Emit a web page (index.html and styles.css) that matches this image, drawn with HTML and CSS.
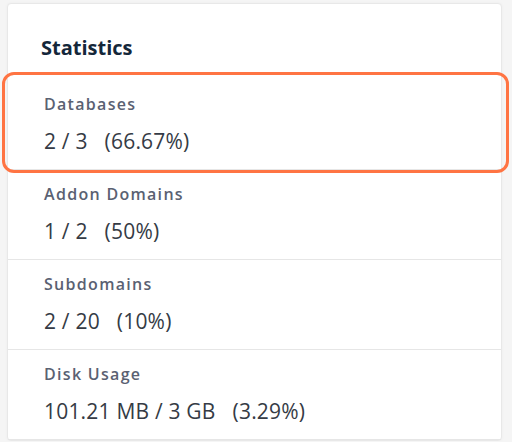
FILE: index.html
```html
<!DOCTYPE html>
<html>
<head>
<meta charset="utf-8">
<link rel="stylesheet" href="styles.css">
</head>
<body>
<div class="card">
  <h2 class="title">Statistics</h2>
  <div class="stats">
    <div class="row highlighted">
      <div class="label">Databases</div>
      <div class="value">2 / 3 &nbsp; (66.67%)</div>
    </div>
    <div class="row">
      <div class="label">Addon Domains</div>
      <div class="value">1 / 2 &nbsp; (50%)</div>
    </div>
    <div class="row">
      <div class="label">Subdomains</div>
      <div class="value">2 / 20 &nbsp; (10%)</div>
    </div>
    <div class="row">
      <div class="label">Disk Usage</div>
      <div class="value">101.21 MB / 3 GB &nbsp; (3.29%)</div>
    </div>
  </div>
</div>
</body>
</html>
```
FILE: styles.css
```css
html, body {
  margin: 0;
  padding: 0;
  background: #f5f5f5;
  font-family: "Open Sans", "Noto Sans", sans-serif;
  overflow: hidden;
}
body {
  padding: 3px 10px 0 7px;
}
.card {
  width: 495px;
  box-sizing: border-box;
  background: #ffffff;
  border: 1px solid #e8e8e8;
  border-radius: 4px;
  box-shadow: 0 0 3px rgba(0, 0, 0, 0.04);
  padding-top: 30px;
}
.title {
  margin: 0 0 18px 0;
  padding-left: 33px;
  font-size: 20px;
  line-height: 28px;
  font-weight: 700;
  color: #14273a;
}
.row {
  position: relative;
  height: 89px;
  box-sizing: content-box;
  border-bottom: 1px solid #e6e6e6;
  padding-left: 36px;
  display: flex;
  flex-direction: column;
}
.label {
  margin-top: 14px;
  font-size: 16px;
  line-height: 20px;
  font-weight: 600;
  letter-spacing: 1.3px;
  color: #5a6172;
}
.value {
  margin-top: 14px;
  font-size: 21px;
  line-height: 26px;
  font-weight: 400;
  color: #353b45;
  letter-spacing: 0.2px;
}
.highlighted::after {
  content: "";
  position: absolute;
  top: -8px;
  bottom: -4px;
  left: -6px;
  right: -8px;
  border: 3px solid #ff7443;
  border-radius: 12px;
  pointer-events: none;
}
```
